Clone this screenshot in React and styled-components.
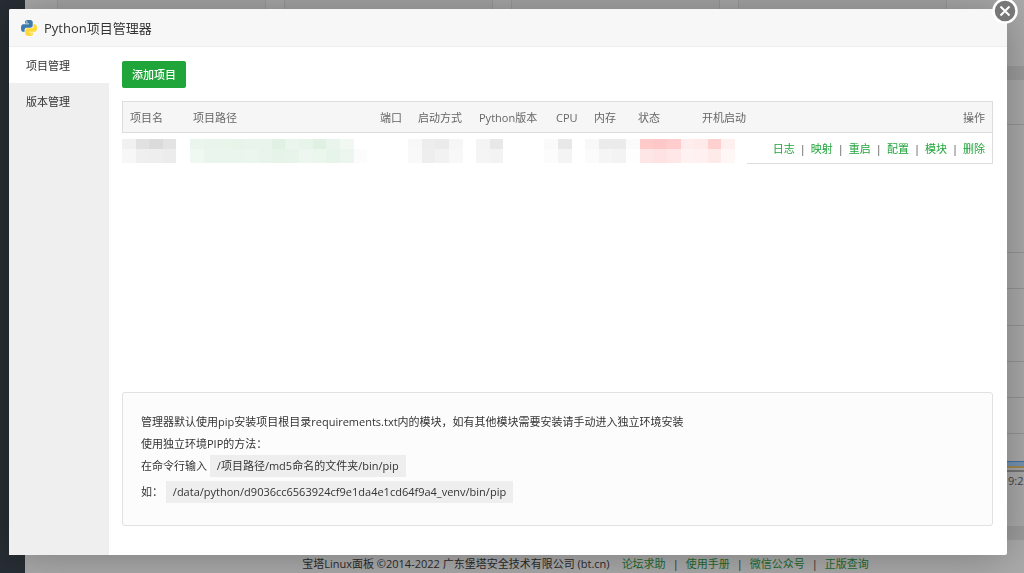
import React from "react";
import styled, { createGlobalStyle, css } from "styled-components";

const Global = createGlobalStyle`
  *, *::before, *::after { box-sizing: border-box; }
  body {
    margin: 0;
    font: 11px/16px "Open Sans", "Noto Sans CJK SC", sans-serif;
    color: #555;
    background: #a5a5a5;
  }
  button { font: inherit; border: 0; cursor: pointer; }
  a { text-decoration: none; }
  p { margin: 0; }
`;

const Page = styled.div`
  display: flex;
  min-height: 100vh;
`;
const SideRail = styled.div`
  flex: 0 0 25px;
  background: #282e35;
`;
const Backdrop = styled.div`
  flex: 1;
  min-width: 0;
  display: flex;
  flex-direction: column;
  background: #acacac;
`;
const Tiles = styled.div`
  display: flex;
  gap: 18px;
  height: 66px;
  padding-left: 32px;
`;
const Tile = styled.div`
  flex: 0 0 209px;
  background: #a8a8a8;
  border: solid #9c9c9c;
  border-width: 0 1px;
`;
const Band = styled.div`
  height: 14px;
  background: #9e9e9e;
`;
const Rows = styled.div`
  flex: 1;
  display: flex;
  flex-direction: column;
`;
const Line = styled.div`
  height: ${(p) => p.$h}px;
  border-bottom: 1px solid #969696;
`;
const Chart = styled.div`
  display: flex;
  flex-direction: column;
  align-items: flex-end;
  color: #444;
  height: 65px;
`;
const ChartStripe = styled.div`
  width: 100%;
  height: ${(p) => p.$h}px;
  background: ${(p) => p.$color};
`;
const ChartLabel = styled.span`
  width: 16px;
  margin-top: 1px;
  overflow: hidden;
`;
const Footer = styled.footer`
  display: flex;
  justify-content: center;
  height: 33px;
  padding: 16px 0 0 122px;
  color: #2b2b2b;
  white-space: pre;
  a { color: #1d6b2c; }
`;
const FooterLinks = styled.nav`
  display: flex;
  gap: 7px;
  margin-left: 12px;
`;

const Overlay = styled.div`
  position: fixed;
  inset: 0;
  display: flex;
  padding: 9px 17px 18px 9px;
`;
const Dialog = styled.section`
  position: relative;
  flex: 1;
  min-width: 0;
  display: flex;
  flex-direction: column;
  background: #fff;
  border-radius: 2px;
  box-shadow: 1px 1px 46px rgba(0, 0, 0, 0.3);
`;
const TitleBar = styled.header`
  display: flex;
  align-items: center;
  gap: 7px;
  height: 38px;
  padding: 0 12px;
  background: #f7f7f7;
  border-bottom: 1px solid #eee;
  border-radius: 2px 2px 0 0;
  color: #333;
  h1 { margin: 0; font-size: 13px; line-height: 20px; font-weight: 400; }
`;
const CloseButton = styled.button`
  position: absolute;
  top: -11px;
  right: -11px;
  width: 26px;
  height: 26px;
  padding: 0;
  background: none;
  svg { display: block; }
`;
const Body = styled.div`
  flex: 1;
  display: flex;
  min-height: 0;
`;
const Tabs = styled.nav`
  flex: 0 0 100px;
  display: flex;
  flex-direction: column;
  background: #efefef;
`;
const Tab = styled.button`
  height: 36px;
  padding: 2px 0 0 17px;
  text-align: left;
  color: #333;
  background: ${(p) => (p.$active ? "#fff" : "transparent")};
`;
const Content = styled.main`
  flex: 1;
  min-width: 0;
  display: flex;
  flex-direction: column;
  align-items: flex-start;
  padding: 14px 14px 29px 13px;
`;
const PrimaryButton = styled.button`
  height: 27px;
  padding: 0 10px;
  border-radius: 2px;
  background: #20a53a;
  color: #fff;
  font-weight: 500;
`;
const Table = styled.table`
  width: 100%;
  margin-top: 13px;
  table-layout: fixed;
  border-collapse: separate;
  border-spacing: 0;
  white-space: nowrap;
`;
const cell = css`
  font-weight: 400;
  text-align: left;
  &:last-child { text-align: right; border-right: 1px solid #ddd; }
`;
const Th = styled.th`
  ${cell}
  height: 32px;
  padding: 2px 0 0 8px;
  background: #f6f6f6;
  color: #666;
  border-top: 1px solid #ddd;
  border-bottom: 1px solid #ddd;
  &:first-child { border-left: 1px solid #ddd; padding-left: 7px; }
  &:last-child { padding-right: 7px; }
`;
const Td = styled.td`
  ${cell}
  height: 31px;
  padding: 6px 12px 0 0;
  vertical-align: top;
  &:last-child { padding: 2px 7px 0 0; vertical-align: middle; border-bottom: 1px solid #ddd; }
`;
const Actions = styled.div`
  display: flex;
  justify-content: flex-end;
  gap: 5px;
  a { color: #20a53a; }
`;
const Mosaic = styled.div`
  display: grid;
  grid-template-columns: repeat(45, 1fr);
  grid-template-rows: 10px 14px;
`;
const Block = styled.span`
  background: ${(p) => p.$color};
`;
const Notes = styled.section`
  width: 100%;
  margin-top: auto;
  padding: 18px 18px 22px;
  border: 1px solid #e1e1e1;
  border-radius: 3px;
  background: #fcfcfc;
  color: #333;
  p { line-height: 22px; }
  p + p:last-child { margin-top: 4px; }
  code {
    display: inline-block;
    padding: 0 7px;
    background: #eee;
    font-family: inherit;
  }
`;

const columns = [
  ["项目名", 63], ["项目路径", 187], ["端口", 38], ["启动方式", 61],
  ["Python版本", 77], ["CPU", 38], ["内存", 44], ["状态", 64],
  ["开机启动", 53], ["操作"],
];

const gap = (n) => Array(n).fill("#fff");
const mosaic = [
  "#f1f1f1", "#e1e1e1", "#dbdbdb", "#e3e3e3", ...gap(1),
  "#eaf6ed", "#e9f5ec", "#e8f5eb", "#e8f4ea", "#e9f5ec", "#e9f5ec",
  "#e1f2e5", "#eaf6ed", "#e6f4e9", "#e0f1e4", "#e9f5ec", "#f0f8f1", ...gap(4),
  "#f8f8f8", "#ededed", "#ebebeb", "#f6f6f6", ...gap(1),
  "#f4f4f4", "#e8e8e8", ...gap(3),
  "#fafafa", "#e8e8e8", ...gap(1),
  "#f8f8f8", "#ebebeb", "#ebebeb", "#fbfbfb",
  "#ffcaca", "#ffc8c8", "#ffcdcd", "#ffeded", "#ffeaea", "#ffd0d0", "#fff0f0",

  "#f7f7f7", "#efefef", "#eeeeee", "#ececec", ...gap(1),
  "#eff8f1", "#eaf6ed", "#eaf6ed", "#eaf6ed", "#ebf6ee", "#e9f5ec",
  "#e5f3e8", "#e6f4e9", "#edf7ef", "#ebf6ed", "#e7f4ea", "#ecf6ee", "#fcfcfc", ...gap(3),
  "#f9f9f9", "#eeeeee", "#f2f2f2", "#f8f8f8", ...gap(1),
  "#f5f5f5", "#f3f3f3", ...gap(3),
  "#fcfcfc", "#f4f4f4", ...gap(1),
  "#fbfbfb", "#f5f5f5", "#f3f3f3", "#fefefe",
  "#ffe6e6", "#ffe2e2", "#ffe7e7", "#fff2f2", "#fff1f1", "#ffeaea", "#fff6f6",
];

const actions = ["日志", "映射", "重启", "配置", "模块", "删除"];
const links = ["论坛求助", "使用手册", "微信公众号", "正版查询"];

function Separated({ items }) {
  return items.map((item, i) => (
    <React.Fragment key={item}>
      {i > 0 && <span>|</span>}
      <a href="#">{item}</a>
    </React.Fragment>
  ));
}

function PythonLogo() {
  return (
    <svg width="16" height="16" viewBox="0 0 24 24" aria-hidden="true">
      <path fill="#3d7aab" d="M11.9 0C5.8 0 6.2 2.6 6.2 2.6v2.8H12v.8H3.900S0 5.800 0 11.900s3.400 5.900 3.400 5.900h2v-2.900s-.1-3.400 3.300-3.400h5.700s3.200.1 3.200-3.100V3.200S18.100 0 11.900 0zM8.700 1.800a1.050 1.050 0 1 1 0 2.100 1.050 1.050 0 0 1 0-2.100z" />
      <path fill="#fed835" d="M12.100 24c6.100 0 5.700-2.600 5.700-2.600v-2.800H12v-.8h8.100s3.900.4 3.900-5.700-3.400-5.900-3.400-5.900h-2v2.900s.1 3.400-3.300 3.400H9.600s-3.200-.1-3.200 3.100v5.200S5.900 24 12.100 24zm3.200-1.800a1.050 1.050 0 1 1 0-2.100 1.050 1.050 0 0 1 0 2.100z" />
    </svg>
  );
}

export default function App() {
  return (
    <>
      <Global />
      <Page>
        <SideRail />
        <Backdrop>
          <Tiles>
            {[1, 2, 3, 4].map((n) => <Tile key={n} />)}
          </Tiles>
          <Band />
          <Rows>
            <Line $h={45} />
            <Line $h={128} />
            <Line $h={36} />
            <Line $h={37} />
            <Line $h={36} />
            <Line $h={36} />
            <Line $h={36} />
          </Rows>
          <Chart>
            <ChartStripe $h={1} $color="#4273a4" />
            <ChartStripe $h={4} $color="#7795b4" />
            <ChartStripe $h={2} $color="#a68a55" />
            <ChartStripe $h={2} $color="#aaa" />
            <ChartStripe $h={2} $color="#777" />
            <ChartLabel>9:2</ChartLabel>
          </Chart>
          <Band />
          <Footer>
            <span>宝塔Linux面板 ©2014-2022 广东堡塔安全技术有限公司 (bt.cn)</span>
            <FooterLinks><Separated items={links} /></FooterLinks>
          </Footer>
        </Backdrop>
      </Page>
      <Overlay>
        <Dialog role="dialog" aria-labelledby="dialog-title">
          <TitleBar>
            <PythonLogo />
            <h1 id="dialog-title">Python项目管理器</h1>
          </TitleBar>
          <Body>
            <Tabs>
              <Tab $active>项目管理</Tab>
              <Tab>版本管理</Tab>
            </Tabs>
            <Content>
              <PrimaryButton>添加项目</PrimaryButton>
              <Table>
                <colgroup>
                  {columns.map(([name, width]) => <col key={name} width={width} />)}
                </colgroup>
                <thead>
                  <tr>{columns.map(([name]) => <Th key={name}>{name}</Th>)}</tr>
                </thead>
                <tbody>
                  <tr>
                    <Td colSpan={9}>
                      <Mosaic>
                        {mosaic.map((color, i) => <Block key={i} $color={color} />)}
                      </Mosaic>
                    </Td>
                    <Td><Actions><Separated items={actions} /></Actions></Td>
                  </tr>
                </tbody>
              </Table>
              <Notes>
                <p>管理器默认使用pip安装项目根目录requirements.txt内的模块，如有其他模块需要安装请手动进入独立环境安装</p>
                <p>使用独立环境PIP的方法：</p>
                <p>在命令行输入 <code>/项目路径/md5命名的文件夹/bin/pip</code></p>
                <p>如： <code>/data/python/d9036cc6563924cf9e1da4e1cd64f9a4_venv/bin/pip</code></p>
              </Notes>
            </Content>
          </Body>
          <CloseButton aria-label="关闭">
            <svg width="26" height="26" viewBox="0 0 26 26">
              <circle cx="13" cy="13" r="11.500" fill="#777" stroke="#fff" strokeWidth="2.500" />
              <path d="M8.500 8.500l9 9M17.500 8.500l-9 9" stroke="#fff" strokeWidth="2" />
            </svg>
          </CloseButton>
        </Dialog>
      </Overlay>
    </>
  );
}
